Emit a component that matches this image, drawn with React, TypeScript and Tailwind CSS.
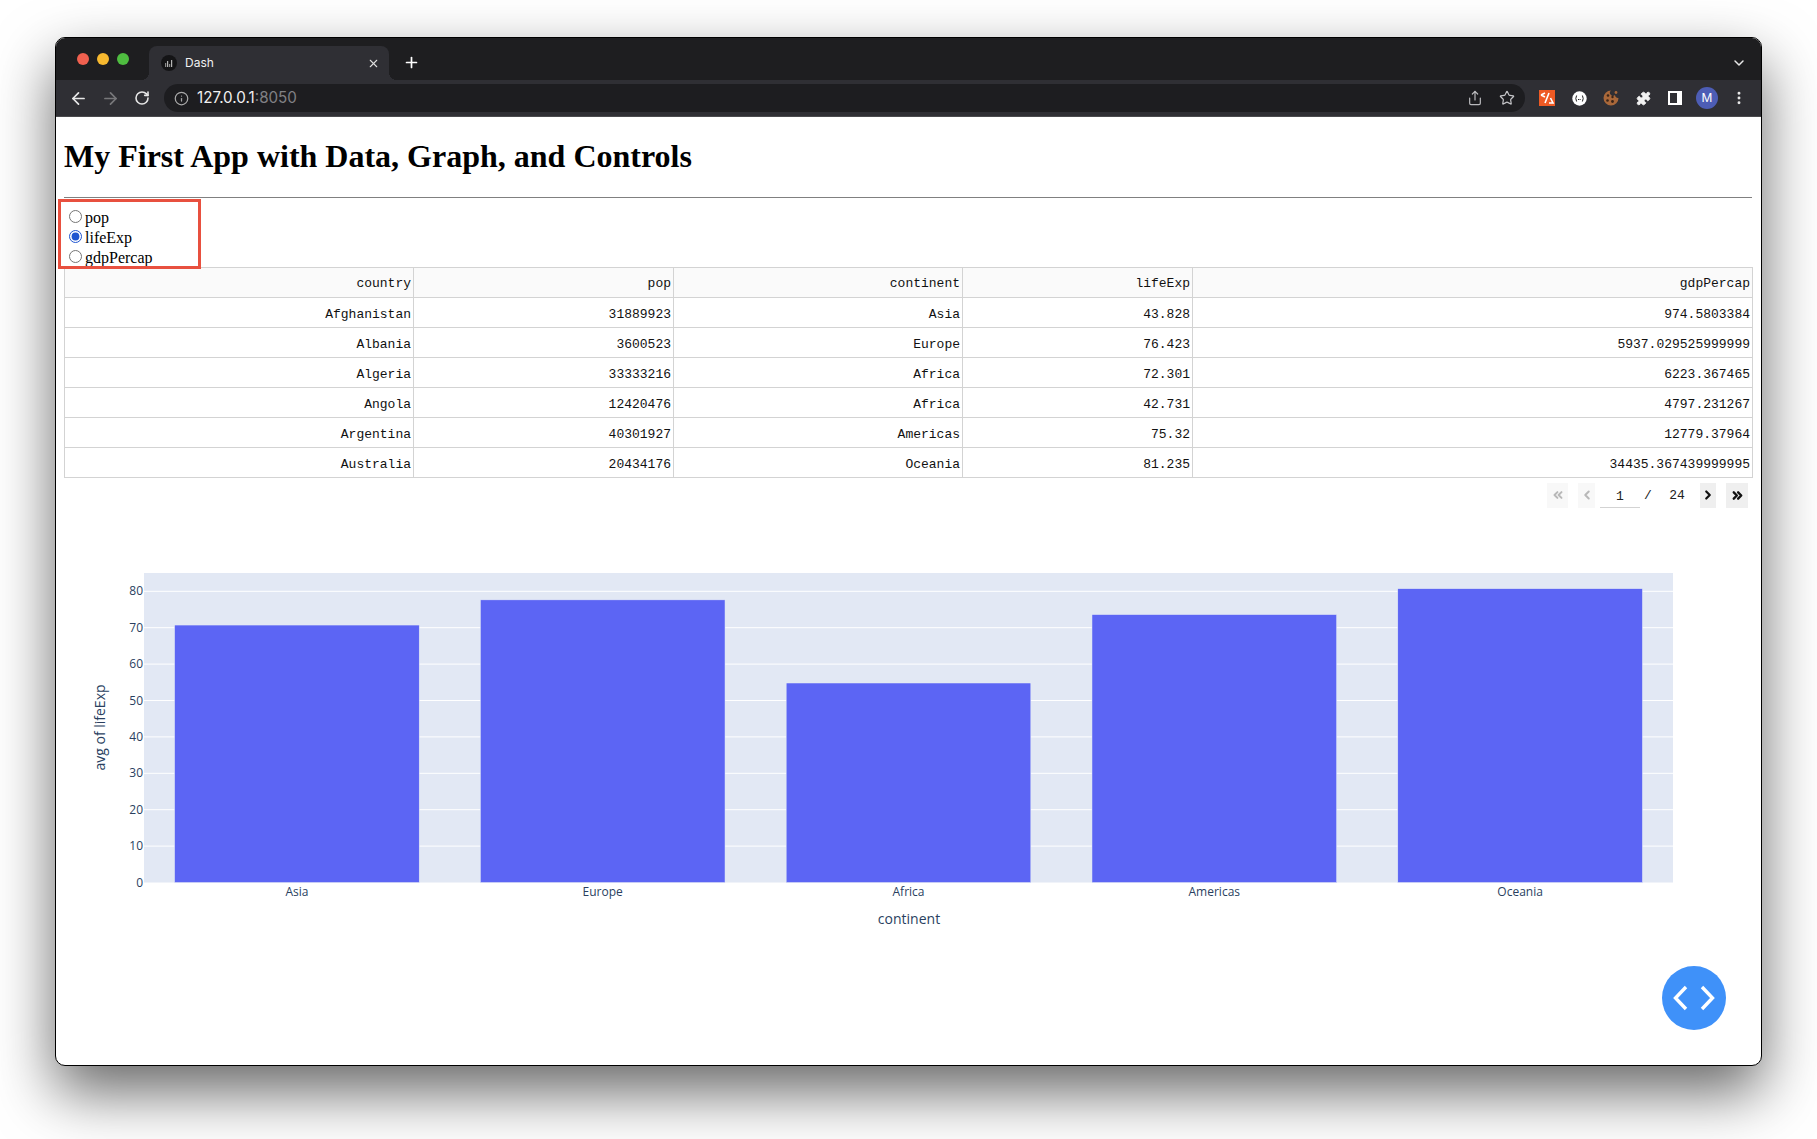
import { ArrowLeft, ArrowRight, ChevronDown, ChevronLeft, ChevronRight, ChevronsLeft, ChevronsRight, Info, MoreVertical, Plus, Puzzle, RotateCw, Share, Star, X } from "lucide-react";

const columns = [
  { name: "country", width: 349 },
  { name: "pop", width: 260 },
  { name: "continent", width: 289 },
  { name: "lifeExp", width: 230 },
  { name: "gdpPercap", width: 560 },
];

const rows = [
  ["Afghanistan", "31889923", "Asia", "43.828", "974.5803384"],
  ["Albania", "3600523", "Europe", "76.423", "5937.029525999999"],
  ["Algeria", "33333216", "Africa", "72.301", "6223.367465"],
  ["Angola", "12420476", "Africa", "42.731", "4797.231267"],
  ["Argentina", "40301927", "Americas", "75.32", "12779.37964"],
  ["Australia", "20434176", "Oceania", "81.235", "34435.367439999995"],
];

const bars = [
  { name: "Asia", value: 70.728 },
  { name: "Europe", value: 77.649 },
  { name: "Africa", value: 54.806 },
  { name: "Americas", value: 73.608 },
  { name: "Oceania", value: 80.7195 },
];

const options = ["pop", "lifeExp", "gdpPercap"];

// chart geometry, svg is 1688 x 440
const PLOT_LEFT = 80;
const PLOT_RIGHT = 1609;
const PLOT_TOP = 53;
const ZERO_Y = 362.5;
const PX_PER_UNIT = 3.64;
const SLOT = (PLOT_RIGHT - PLOT_LEFT) / bars.length;

function TabBar() {
  return (
    <div className="flex h-[42px] items-end bg-[#1e1e20] pl-[21px]">
      <div className="flex h-[42px] items-center gap-2 pb-[1px]">
        <span className="h-3 w-3 rounded-full bg-[#f0604f]" />
        <span className="h-3 w-3 rounded-full bg-[#f7b92f]" />
        <span className="h-3 w-3 rounded-full bg-[#4fbd40]" />
      </div>
      <div className="relative ml-5 flex h-[34px] w-[240px] items-center rounded-t-lg bg-[#2f2f34] pl-3 pr-2">
        <span className="absolute bottom-0 -left-2 h-2 w-2 bg-[radial-gradient(circle_at_0_0,transparent_8px,#2f2f34_8px)]" />
        <span className="absolute bottom-0 -right-2 h-2 w-2 bg-[radial-gradient(circle_at_100%_0,transparent_8px,#2f2f34_8px)]" />
        <svg width="16" height="16" viewBox="0 0 16 16">
          <circle cx="8" cy="8" r="8" fill="#141416" />
          <rect x="4" y="8" width="1.2" height="4" fill="#8a8a8a" />
          <rect x="6" y="6" width="1.2" height="6" fill="#b5b5b5" />
          <rect x="8" y="9" width="1.2" height="3" fill="#8a8a8a" />
          <rect x="10" y="5" width="1.2" height="7" fill="#b5b5b5" />
        </svg>
        <span className="ml-2 font-['Inter',sans-serif] text-xs text-[#f1f1f1]">Dash</span>
        <X className="ml-auto mr-[1px] text-[#dddddd]" size={13} strokeWidth={2} />
      </div>
      <div className="flex h-[34px] w-11 items-center justify-center pb-[1px]">
        <Plus className="text-white" size={17} strokeWidth={2.4} />
      </div>
      <div className="ml-auto flex h-[34px] w-11 items-center justify-center">
        <ChevronDown className="text-[#e8e8e8]" size={16} strokeWidth={2.2} />
      </div>
    </div>
  );
}

function Slot({ children }: { children: React.ReactNode }) {
  return <div className="flex h-7 w-8 shrink-0 items-center justify-center">{children}</div>;
}

function Toolbar() {
  return (
    <div className="flex h-[37px] items-center border-b border-[#4a4a4d] bg-[#2f2f34] pl-[6px]">
      <Slot><ArrowLeft className="text-[#e6e6e6]" size={19} strokeWidth={2.2} /></Slot>
      <Slot><ArrowRight className="text-[#77777a]" size={19} strokeWidth={2.2} /></Slot>
      <Slot><RotateCw className="text-[#e6e6e6]" size={16} strokeWidth={2.4} /></Slot>
      <div className="ml-[6px] flex h-7 w-[1361px] shrink-0 items-center rounded-full bg-[#1d1d20] pl-[10px] pr-[2px]">
        <Info className="text-[#a8a8a8]" size={15} strokeWidth={2} />
        <span className="ml-[8px] font-['Inter',sans-serif] text-[15.2px] text-[#f0f0f0]">
          127.0.0.1<span className="text-[#808084]">:8050</span>
        </span>
        <div className="ml-auto flex">
          <Slot><Share className="text-[#b9b9bc]" size={16} strokeWidth={1.8} /></Slot>
          <Slot><Star className="text-[#c4c4c7]" size={16} strokeWidth={1.8} /></Slot>
        </div>
      </div>
      <div className="ml-[6px] flex">
        <Slot>
          <svg width="16" height="16" viewBox="0 0 16 16">
            <rect width="16" height="16" fill="#ee5a24" />
            <path d="M2 5 L6 3 M2 5 L6 7 M10 3 L6 13 M10 13 L14 13 L11.5 8" stroke="#fff" strokeWidth="1.6" fill="none" />
          </svg>
        </Slot>
        <Slot>
          <svg width="15" height="15" viewBox="0 0 15 15">
            <circle cx="7.5" cy="7.5" r="7.2" fill="#fff" />
            <path d="M4.6 4.5 Q3 7.5 4.6 10.5 M10.4 4.5 Q12 7.5 10.4 10.5" stroke="#222" strokeWidth="1" fill="none" />
            <path d="M6 8.5 H9" stroke="#222" strokeWidth="1" strokeDasharray="1 0.6" />
          </svg>
        </Slot>
        <Slot>
          <svg width="16" height="16" viewBox="0 0 16 16">
            <path d="M8 .5 A7.5 7.5 0 1 0 15.5 8 A3 3 0 0 1 12 5 A3 3 0 0 1 8 .5 Z" fill="#a9683a" />
            <circle cx="5" cy="5.5" r="1.3" fill="#3a2417" />
            <circle cx="9.5" cy="7" r="1.2" fill="#3a2417" />
            <circle cx="4.5" cy="10.5" r="1.3" fill="#3a2417" />
            <circle cx="9.5" cy="11.5" r="1.4" fill="#3a2417" />
            <circle cx="13" cy="2.5" r="1.4" fill="#a9683a" />
          </svg>
        </Slot>
        <Slot><Puzzle className="fill-[#f2f2f2] text-[#f2f2f2]" size={15} strokeWidth={1.5} /></Slot>
        <Slot>
          <div className="flex h-[14px] w-[14px] border-2 border-white bg-white">
            <div className="w-[7px] bg-[#2f2f34]" />
          </div>
        </Slot>
        <Slot>
          <div className="flex h-[22px] w-[22px] items-center justify-center rounded-full bg-[#4d5db5] font-['Inter',sans-serif] text-xs text-white">M</div>
        </Slot>
        <Slot><MoreVertical className="text-[#e8e8e8]" size={16} strokeWidth={2.4} /></Slot>
      </div>
    </div>
  );
}

function RadioList() {
  return (
    <div className="relative mt-[9px] font-['Liberation_Serif',serif] text-base leading-5 text-black">
      {options.map((opt) => (
        <label key={opt} className="flex h-5 items-center">
          <input type="radio" name="metric" className="mx-[5px] mr-[3px] h-[13px] w-[13px] accent-[#1f55d0]" checked={opt === "lifeExp"} readOnly />
          <span className="pt-[2px]">{opt}</span>
        </label>
      ))}
      {/* red annotation box */}
      <div className="absolute -left-[6px] -top-[8px] h-[70px] w-[143px] border-[3px] border-[#e8503f]" />
    </div>
  );
}

function DataTable() {
  return (
    <table className="w-[1688px] table-fixed border-collapse font-['Liberation_Mono',monospace] text-[13px] text-[#111111]">
      <colgroup>
        {columns.map((c) => (
          <col key={c.name} style={{ width: c.width }} />
        ))}
      </colgroup>
      <thead>
        <tr className="h-[30px] bg-[#fafafa]">
          {columns.map((c) => (
            <th key={c.name} className="border border-[#d3d3d3] pr-[2px] pt-[3px] text-right font-normal">{c.name}</th>
          ))}
        </tr>
      </thead>
      <tbody>
        {rows.map((row) => (
          <tr key={row[0]} className="h-[30px]">
            {row.map((cell, i) => (
              <td key={i} className="border border-[#d3d3d3] pr-[2px] pt-[5px] text-right">{cell}</td>
            ))}
          </tr>
        ))}
      </tbody>
    </table>
  );
}

function Pagination() {
  return (
    <div className="mt-[5px] flex h-[25px] items-center justify-end pr-[4px] font-['Liberation_Mono',monospace] text-[13px] text-[#222222]">
      <div className="flex h-[25px] w-[21px] items-center justify-center bg-[#f8f8f8]">
        <ChevronsLeft className="text-[#b8b8b8]" size={14} strokeWidth={3.4} />
      </div>
      <div className="ml-[10px] flex h-[25px] w-[17px] items-center justify-center bg-[#f8f8f8]">
        <ChevronLeft className="text-[#b8b8b8]" size={14} strokeWidth={3.4} />
      </div>
      <div className="ml-[5px] flex h-[25px] w-[40px] items-end justify-center border-b border-[#d3d3d3]">1</div>
      <span className="ml-[4px] w-[8px] text-center">/</span>
      <span className="ml-[16px] w-[18px] text-center">24</span>
      <div className="ml-[14px] flex h-[25px] w-[16px] items-center justify-center bg-[#efefef]">
        <ChevronRight className="text-[#111111]" size={14} strokeWidth={3.8} />
      </div>
      <div className="ml-[10px] flex h-[25px] w-[22px] items-center justify-center bg-[#efefef]">
        <ChevronsRight className="text-[#111111]" size={15} strokeWidth={3.8} />
      </div>
    </div>
  );
}

function BarChart() {
  const ticks = [0, 10, 20, 30, 40, 50, 60, 70, 80];
  return (
    <svg className="mt-3 block" width="1688" height="440" viewBox="0 0 1688 440" fontFamily="'Open Sans', sans-serif" fill="#2a3f5f">
      <rect x={PLOT_LEFT} y={PLOT_TOP} width={PLOT_RIGHT - PLOT_LEFT} height={ZERO_Y - PLOT_TOP} fill="#e2e8f4" />
      {ticks.map((t) => {
        const y = ZERO_Y - t * PX_PER_UNIT;
        return (
          <g key={t}>
            {t > 0 && <line x1={PLOT_LEFT} x2={PLOT_RIGHT} y1={y} y2={y} stroke="#ffffff" strokeWidth="1" />}
            <text x={PLOT_LEFT - 1} y={y + 4} textAnchor="end" fontSize="12">{t}</text>
          </g>
        );
      })}
      {bars.map((b, i) => {
        const h = b.value * PX_PER_UNIT;
        const cx = PLOT_LEFT + SLOT * (i + 0.5);
        return (
          <g key={b.name}>
            <rect x={cx - SLOT * 0.4} y={ZERO_Y - h} width={SLOT * 0.8} height={h} fill="#5c65f4" stroke="#e5ecf6" strokeWidth="0.5" />
            <text x={cx} y={376} textAnchor="middle" fontSize="12">{b.name}</text>
          </g>
        );
      })}
      <text x={845} y={404} textAnchor="middle" fontSize="14">continent</text>
      <text x={0} y={0} transform="translate(41 207.5) rotate(-90)" textAnchor="middle" fontSize="14">avg of lifeExp</text>
    </svg>
  );
}

export default function App() {
  return (
    <div className="h-[1139px] w-[1817px] overflow-hidden bg-white pl-[55px] pt-[37px]">
      <div className="relative h-[1029px] w-[1707px] overflow-hidden rounded-[10px] border border-black bg-white shadow-[0_26px_60px_0px_rgba(0,0,0,0.6)]">
        <TabBar />
        <Toolbar />
        <div className="pl-2 pr-[9px]">
          <h1 className="my-[21.44px] font-['Liberation_Serif',serif] text-[32px] font-bold leading-[37px] text-black">
            My First App with Data, Graph, and Controls
          </h1>
          <hr className="h-px border-0 bg-[#808080]" />
          <RadioList />
          <DataTable />
          <Pagination />
          <BarChart />
        </div>
        {/* floating code button */}
        <div className="absolute left-[1606px] top-[928px] flex h-16 w-16 items-center justify-center rounded-full bg-[#3f91f9]">
          <svg width="42" height="26" viewBox="0 0 42 26" fill="none" stroke="#ffffff" strokeWidth="3.4">
            <path d="M13 2 L2.5 13 L13 24" />
            <path d="M29 2 L39.5 13 L29 24" />
          </svg>
        </div>
      </div>
    </div>
  );
}
